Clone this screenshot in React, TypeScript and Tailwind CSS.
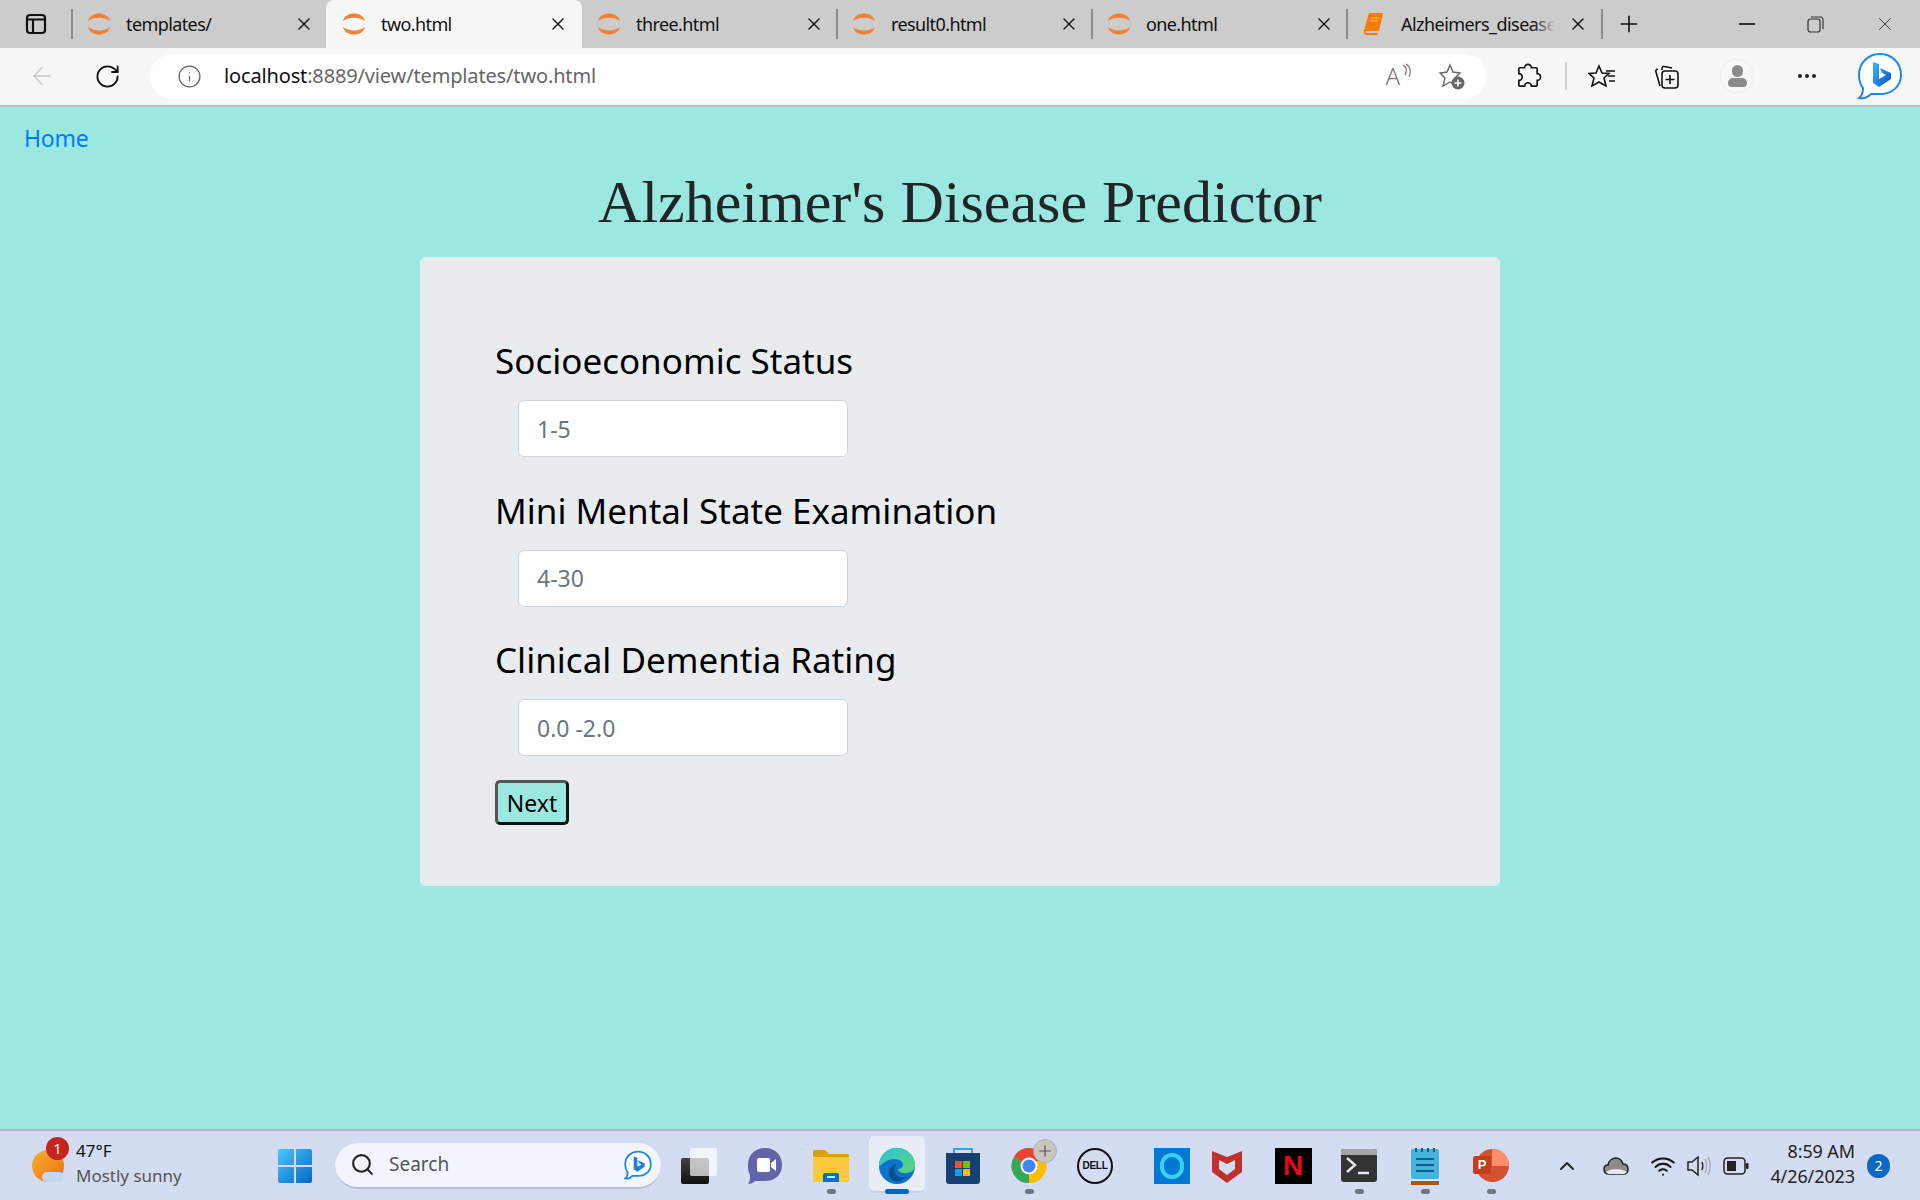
import { ArrowLeft, ChevronUp, Info, MoreHorizontal, Plus, RotateCw, Search, Wifi, X } from 'lucide-react';

function Spinner() {
  return (
    <svg width="24" height="24" viewBox="0 0 24 24" className="shrink-0">
      <path d="M1 9C3 -1 21 -1 23 9C18 4.5 6 4.5 1 9Z" fill="#f58233" />
      <path d="M1 15C3 25 21 25 23 15C18 19.5 6 19.5 1 15Z" fill="#f58233" />
    </svg>
  );
}

function Sep({ hidden }: { hidden?: boolean }) {
  return <div className={hidden ? 'w-[2px] h-[30px] shrink-0' : 'w-[2px] h-[30px] shrink-0 bg-[#8c8c8c]'} />;
}

function Tab({ title, className }: { title: string; className: string }) {
  return (
    <div className={`flex items-center h-[48px] shrink-0 ${className}`}>
      <Spinner />
      <span className="ml-[15px] text-[18px] text-[#111] tracking-[-0.6px] flex-1">{title}</span>
      <X size={20} strokeWidth={1.6} color="#111" />
    </div>
  );
}

function TabBar() {
  return (
    <div className="flex items-center h-[48px] bg-[#cccccc] shrink-0">
      <div className="w-[71px] flex justify-center shrink-0">
        <svg width="22" height="22" viewBox="0 0 22 22" fill="none" stroke="#111" strokeWidth="2.2">
          <rect x="2" y="2" width="18" height="18" rx="3" />
          <path d="M2 6.5H20M8 6.5V20" />
        </svg>
      </div>
      <Sep />
      <Tab title="templates/" className="w-[253px] pl-[14px] pr-[12px]" />
      <Tab title="two.html" className="w-[256px] pl-[16px] pr-[14px] bg-[#f7f7f7] rounded-t-lg" />
      <Tab title="three.html" className="w-[254px] pl-[15px] pr-[12px]" />
      <Sep />
      <Tab title="result0.html" className="w-[253px] pl-[14px] pr-[12px]" />
      <Sep />
      <Tab title="one.html" className="w-[253px] pl-[14px] pr-[12px]" />
      <Sep />
      <div className="flex items-center h-[48px] w-[253px] shrink-0 pl-[16px] pr-[12px]">
        <svg width="20" height="24" viewBox="0 0 20 24" className="shrink-0">
          <path d="M5 1H19L15 19H3C1 19 1 21 3 21H14L13.5 23H3C-1 23 0 19 0.5 17Z" fill="#f57c00" />
          <path d="M7 6H15M6.5 9H14" stroke="#ffc27a" strokeWidth="1" />
        </svg>
        <div className="relative ml-[17px] w-[154px] overflow-hidden shrink-0">
          <span className="block whitespace-nowrap text-[18px] text-[#111] tracking-[-0.55px]">Alzheimers_disease</span>
          <div className="absolute right-0 top-0 bottom-0 w-[22px] bg-gradient-to-r from-transparent to-[#cccccc]" />
        </div>
        <X size={20} strokeWidth={1.6} color="#111" className="ml-[13px] shrink-0" />
      </div>
      <Sep />
      <Plus size={26} strokeWidth={1.5} color="#111" className="ml-[13px] shrink-0" />
      <div className="flex-1 flex justify-end items-center pr-[24px]">
        <div className="w-[16px] h-[1.5px] bg-[#333]" />
        <svg width="17" height="17" viewBox="0 0 17 17" fill="none" stroke="#333" strokeWidth="1.2" className="ml-[52px]">
          <rect x="1" y="3" width="12" height="13" rx="2.5" />
          <path d="M4 1H13C15 1 16 2 16 4V13" />
        </svg>
        <X size={22} strokeWidth={1} color="#333" className="ml-[50px]" />
      </div>
    </div>
  );
}

function ToolBar() {
  return (
    <div className="flex items-center h-[59px] bg-[#f7f7f7] border-b-2 border-[#bbbbbb] shrink-0 pb-[1px]">
      <ArrowLeft size={28} strokeWidth={1.2} color="#c9c9c9" className="ml-[28px] shrink-0" />
      <RotateCw size={27} strokeWidth={1.6} color="#111" className="ml-[38px] shrink-0" />
      <div className="ml-[29px] w-[1336px] h-[45px] bg-white rounded-full flex items-center shrink-0">
        <Info size={25} strokeWidth={1.2} color="#666" className="ml-[27px] shrink-0" />
        <span className="ml-[22px] text-[20px] tracking-[-0.15px] text-[#111]">localhost<span className="text-[#666]">:8889/view/templates/two.html</span></span>
        <div className="flex-1" />
        <span className="text-[24px] font-light text-[#777] mr-[2px]">A</span>
        <svg width="10" height="18" viewBox="0 0 10 18" fill="none" stroke="#777" strokeWidth="1.2" className="mb-[8px]">
          <path d="M1 2C5 4 5 9 3 12M4 1C9 4 9 10 7 14" />
        </svg>
        <svg width="28" height="28" viewBox="0 0 28 28" className="ml-[26px] mr-[20px]">
          <path d="M12 3L15 10L22 11L17 16L18 24L12 20L5 24L7 16L2 11L9 10Z" fill="none" stroke="#666" strokeWidth="1.4" />
          <circle cx="20" cy="21" r="6.5" fill="#666" />
          <path d="M20 17.5V24.5M16.5 21H23.5" stroke="#fff" strokeWidth="1.5" />
        </svg>
      </div>
      <svg width="28" height="28" viewBox="0 0 29 29" fill="none" stroke="#111" strokeWidth="1.7" className="ml-[28px] shrink-0">
        <path d="M11 6a3.5 3.5 0 0 1 7 0h5a1 1 0 0 1 1 1v5a3.5 3.5 0 0 1 0 7v5a1 1 0 0 1-1 1h-5a3.5 3.5 0 0 0-7 0H6a1 1 0 0 1-1-1v-5a3.5 3.5 0 0 0 0-7V7a1 1 0 0 1 1-1Z" />
      </svg>
      <div className="ml-[23px] w-[2px] h-[28px] bg-[#cfcfcf] shrink-0" />
      <svg width="28" height="26" viewBox="0 0 28 26" fill="none" stroke="#111" strokeWidth="1.6" className="ml-[21px] shrink-0">
        <path d="M11 3L14 10L21 10.5L16 15L18 23L11 19L4 23L6 15L1 10.5L8 10Z" />
        <path d="M18 8H27M20 13H27M21 18H27" />
      </svg>
      <svg width="26" height="28" viewBox="0 0 26 28" fill="none" stroke="#111" strokeWidth="1.6" className="ml-[38px] shrink-0">
        <path d="M8 8V6.5C8 5 9 4 10.5 4.5L18 6M6 24L2 10C1.5 8.5 2 7.5 4 7" />
        <rect x="8" y="9" width="16" height="17" rx="3" />
        <path d="M16 13V22M11.5 17.5H20.5" />
      </svg>
      <div className="ml-[40px] w-[34px] h-[34px] rounded-full border border-[#eeeeee] flex flex-col items-center justify-center shrink-0">
        <div className="w-[11px] h-[12px] rounded-full bg-[#8a8a8a]" />
        <div className="w-[19px] h-[9px] rounded-t-[6px] rounded-b-[5px] bg-[#8a8a8a] mt-[1px]" />
      </div>
      <MoreHorizontal size={24} strokeWidth={2} color="#222" className="ml-[41px] shrink-0" />
      <svg width="46" height="48" viewBox="0 0 46 48" className="ml-[38px] shrink-0">
        <defs>
          <linearGradient id="bingB" x1="0" y1="0" x2="1" y2="1">
            <stop offset="0" stopColor="#37bdf8" />
            <stop offset="1" stopColor="#0a4fd0" />
          </linearGradient>
        </defs>
        <path d="M23 2C35 2 44 11 44 23C44 34 35 42 24 42H14C10 46 6 47 2 46C5 44 6 41 6 36C3 32 2 28 2 23C2 11 11 2 23 2Z" fill="#fff" stroke="#1e88e5" strokeWidth="2" />
        <path d="M16 10L22 12V27L29 23L25 21L23 16L34 21V27L22 35L16 31Z" fill="url(#bingB)" />
      </svg>
    </div>
  );
}

function Field({ label, hint }: { label: string; hint: string }) {
  return (
    <div>
      <label className="block text-[35px] leading-[54px] text-black mb-[12px]">{label}</label>
      <input
        placeholder={hint}
        className="block ml-[23px] w-[330px] h-[57px] bg-white border border-[#ced4da] rounded-[6px] pl-[18px] text-[23px] placeholder:text-[#6c757d]"
      />
    </div>
  );
}

function Page() {
  return (
    <main className="flex-1 bg-[#9be8e1] min-h-0">
      <div className="px-[24px] pt-[13px] h-[50px]">
        <a className="text-[#007bff] text-[23px] leading-[36px] tracking-[-0.2px]">Home</a>
      </div>
      <h1 className="font-['Liberation_Serif',serif] text-center text-[60px] leading-[72px] text-[#212529] h-[100px] pt-[9px]">
        Alzheimer's Disease Predictor
      </h1>
      <div className="w-[1080px] h-[629px] mx-auto bg-[#e9ecef] rounded-[6px] pl-[75px] pt-[77px]">
        <div className="flex flex-col gap-[26.5px]">
          <Field label="Socioeconomic Status" hint="1-5" />
          <Field label="Mini Mental State Examination" hint="4-30" />
          <Field label="Clinical Dementia Rating" hint="0.0 -2.0" />
        </div>
        <button className="mt-[24px] w-[74px] h-[45px] bg-[#9be8e1] border-[3px] border-t-[#555] border-l-[#555] border-r-[#111] border-b-[#111] rounded-[5px] text-[23px] leading-[30px] text-black">
          Next
        </button>
      </div>
    </main>
  );
}

function Cell({ dot, active, children, className }: { dot?: boolean; active?: boolean; children: React.ReactNode; className?: string }) {
  return (
    <div className={`relative h-[71px] flex items-center justify-center shrink-0 ${className ?? 'w-[66px]'}`}>
      {active && <div className="absolute left-[5px] right-[5px] top-[6px] h-[57px] rounded-md bg-[#e8edf8] border-b-2 border-[#c8cfe4]" />}
      <div className="relative">{children}</div>
      {dot && <div className="absolute bottom-[7px] w-[9px] h-[5px] rounded-full bg-[#70757f]" />}
      {active && <div className="absolute bottom-[7px] w-[24px] h-[5px] rounded-full bg-[#0067c0]" />}
    </div>
  );
}

function TaskBar() {
  return (
    <div className="h-[71px] shrink-0 bg-[#d4dcf2] border-t-2 border-[#b4b6cb] flex items-center relative">
      {/* weather */}
      <div className="w-[258px] flex items-center pl-[30px] shrink-0">
        <div className="relative w-[36px] h-[40px] shrink-0 mt-[4px]">
          <div className="absolute left-[2px] top-[2px] w-[32px] h-[32px] rounded-full bg-gradient-to-br from-[#f5b32c] to-[#ee6a12]" />
          <div className="absolute left-[12px] top-[24px] w-[22px] h-[10px] rounded-full bg-[#c6d6ee]" />
          <div className="absolute left-[16px] top-[-11px] w-[23px] h-[23px] rounded-full bg-[#c4261d] text-white text-[14px] leading-[23px] text-center">1</div>
        </div>
        <div className="ml-[10px] flex flex-col mb-[4px]">
          <span className="text-[17px] leading-[24px] text-[#111]">47°F</span>
          <span className="text-[17px] leading-[25px] text-[#555] whitespace-nowrap">Mostly sunny</span>
        </div>
      </div>
      {/* start */}
      <svg width="36" height="36" viewBox="0 0 36 36" className="shrink-0 ml-[19px]">
        <defs>
          <linearGradient id="winG" x1="0" y1="0" x2="1" y2="1">
            <stop offset="0" stopColor="#4fc6fa" />
            <stop offset="1" stopColor="#0067c8" />
          </linearGradient>
        </defs>
        <path d="M1 3Q1 1 3 1H17V17H1ZM19 1H33Q35 1 35 3V17H19ZM1 19H17V35H3Q1 35 1 33ZM19 19H35V33Q35 35 33 35H19Z" fill="url(#winG)" />
      </svg>
      {/* search */}
      <div className="ml-[22px] w-[326px] h-[46px] rounded-full bg-[#f2f5fd] border-b-2 border-[#babed2] flex items-center shrink-0">
        <Search size={25} strokeWidth={2} color="#222" className="ml-[15px] shrink-0" />
        <span className="ml-[14px] text-[19px] text-[#555] flex-1">Search</span>
        <svg width="28" height="32" viewBox="0 0 46 48" className="mr-[9px]">
          <path d="M23 2C35 2 44 11 44 23C44 34 35 42 24 42H14C10 46 6 47 2 46C5 44 6 41 6 36C3 32 2 28 2 23C2 11 11 2 23 2Z" fill="#fff" stroke="#1e88e5" strokeWidth="3" />
          <path d="M16 10L22 12V27L29 23L25 21L23 16L34 21V27L22 35L16 31Z" fill="#1f7fe0" />
        </svg>
      </div>
      <div className="w-[5px] shrink-0" />
      {/* pinned apps */}
      <Cell>
        <div className="relative w-[36px] h-[36px]">
          <div className="absolute left-0 bottom-0 w-[28px] h-[26px] rounded-[2px] bg-gradient-to-b from-[#444] to-[#111]" />
          <div className="absolute right-0 top-0 w-[27px] h-[28px] rounded-[2px] bg-white/70" />
        </div>
      </Cell>
      <Cell>
        <svg width="36" height="38" viewBox="0 0 36 38">
          <path d="M18 1C28 1 35 8 35 18C35 28 28 34 18 34H8C6 36 4 37 1 37C3 35 3 32 3 28C1 25 1 22 1 18C1 8 8 1 18 1Z" fill="#6264a7" />
          <rect x="10" y="11" width="13" height="14" rx="2" fill="#fff" />
          <path d="M24 16L29 12V24L24 20Z" fill="#fff" />
        </svg>
      </Cell>
      <Cell dot>
        <svg width="38" height="34" viewBox="0 0 38 34">
          <path d="M1 3Q1 1 3 1H13L17 5H36Q37 5 37 7V12H1Z" fill="#d99f0f" />
          <path d="M1 8H37V33H1Z" fill="#fdc93f" />
          <path d="M11 33V26Q11 24 13 24H25Q27 24 27 26V33Z" fill="#0a6fc2" />
          <rect x="15" y="27" width="8" height="2" fill="#cfe6f8" />
        </svg>
      </Cell>
      <Cell active>
        <svg width="38" height="38" viewBox="0 0 38 38">
          <defs>
            <linearGradient id="edgeA" x1="0" y1="0" x2="1" y2="1">
              <stop offset="0" stopColor="#2bc4d8" />
              <stop offset="1" stopColor="#5fd47a" />
            </linearGradient>
          </defs>
          <circle cx="19" cy="19" r="18" fill="#0c74c9" />
          <path d="M1 19C1 8 9 1 19 1C30 1 37 9 37 18C37 24 32 26 27 26C22 26 20 24 20 22C25 22 26 18 24 15C21 11 12 11 7 15C4 17 2 19 1 19Z" fill="url(#edgeA)" />
          <path d="M24 33C18 37 10 33 11 24C12 20 16 17 19 17C15 20 16 27 21 30C23 31 27 31 31 29C29 31 27 32 24 33Z" fill="#0b4f8f" />
        </svg>
      </Cell>
      <Cell>
        <svg width="36" height="38" viewBox="0 0 36 38">
          <path d="M9 6V2H27V6" fill="none" stroke="#26a9e0" strokeWidth="2" />
          <path d="M1 6H35V34Q35 37 32 37H4Q1 37 1 34Z" fill="#173f72" />
          <rect x="10" y="14" width="7" height="7" fill="#f25022" />
          <rect x="18" y="14" width="7" height="7" fill="#7fba00" />
          <rect x="10" y="22" width="7" height="7" fill="#00a4ef" />
          <rect x="18" y="22" width="7" height="7" fill="#ffb900" />
        </svg>
      </Cell>
      <Cell dot>
        <div className="relative">
          <svg width="38" height="38" viewBox="0 0 38 38">
            <path d="M19 19L4 10A17 17 0 0 1 34 10Z" fill="#ea4335" />
            <path d="M19 19L34 10A17 17 0 0 1 19 36Z" fill="#fbbc05" />
            <path d="M19 19L19 36A17 17 0 0 1 4 10Z" fill="#34a853" />
            <circle cx="19" cy="19" r="8.5" fill="#fff" />
            <circle cx="19" cy="19" r="6.5" fill="#4285f4" />
          </svg>
          <div className="absolute right-[-9px] top-[-8px] w-[24px] h-[24px] rounded-full bg-[#c9c7c0] border border-[#a8adb8] flex items-center justify-center">
            <Plus size={18} strokeWidth={1.6} color="#555" />
          </div>
        </div>
      </Cell>
      <Cell>
        <div className="w-[36px] h-[36px] rounded-full border-2 border-[#111] flex items-center justify-center font-['Liberation_Sans',sans-serif] text-[10px] font-bold text-[#111] tracking-[-0.3px]">
          DELL
        </div>
      </Cell>
      <Cell className="w-[44px] ml-[22px]">
        <div className="w-[36px] h-[36px] bg-[#0078d4] flex items-center justify-center">
          <div className="w-[24px] h-[26px] rounded-full border-[4px] border-[#36d2f5]" />
        </div>
      </Cell>
      <Cell>
        <svg width="32" height="36" viewBox="0 0 32 36">
          <path d="M1 3L16 9L31 3V24L16 35L1 24Z" fill="#c0302d" />
          <path d="M8 12L16 16L24 12V21L16 27L8 21Z" fill="#d4dcf2" />
        </svg>
      </Cell>
      <Cell>
        <div className="w-[37px] h-[36px] bg-black flex items-center justify-center text-[#e50914] text-[28px] font-bold font-['Liberation_Sans',sans-serif]">N</div>
      </Cell>
      <Cell dot>
        <div className="w-[36px] h-[33px] rounded-[3px] bg-[#333] overflow-hidden">
          <div className="h-[6px] bg-[#a6a6a6]" />
          <svg width="36" height="27" viewBox="0 0 36 27" fill="none" stroke="#e8e8e8" strokeWidth="2.4">
            <path d="M6 3L14 10L6 17M17 18H28" />
          </svg>
        </div>
      </Cell>
      <Cell dot>
        <svg width="30" height="38" viewBox="0 0 30 38">
          <rect x="1" y="2" width="28" height="30" rx="2" fill="#47b3da" />
          <rect x="1" y="32" width="28" height="2" fill="#e8e2d8" />
          <rect x="1" y="34" width="28" height="4" fill="#a9570f" />
          <path d="M6 12H24M6 18H24M6 24H24" stroke="#0b5f88" strokeWidth="2" />
          <path d="M6 1V5M12 1V5M18 1V5M24 1V5" stroke="#0b5f88" strokeWidth="2" />
        </svg>
      </Cell>
      <Cell dot>
        <div className="relative w-[36px] h-[33px]">
          <div className="absolute right-0 top-0 w-[33px] h-[33px] rounded-full overflow-hidden bg-[#d35230]">
            <div className="absolute right-0 top-0 w-[17px] h-[17px] bg-[#ff8f6b]" />
          </div>
          <div className="absolute left-0 top-[7px] w-[18px] h-[18px] rounded-[2px] bg-[#c43e1c] text-white text-[13px] font-bold leading-[18px] text-center font-['Liberation_Sans',sans-serif]">P</div>
        </div>
      </Cell>
      {/* tray */}
      <ChevronUp size={24} strokeWidth={2} color="#222" className="ml-[31px] shrink-0" />
      <svg width="26" height="20" viewBox="0 0 26 20" className="ml-[24px] shrink-0">
        <path d="M6 18C2 18 1 15 1 13C1 10 3 9 5 9C6 4 10 2 13 2C17 2 19 5 20 8C23 8 25 10 25 13C25 16 23 18 20 18Z" fill="#8b8b8b" stroke="#222" strokeWidth="1.5" />
        <path d="M3 16C8 12 18 12 24 16C22 18 20 18 20 18H6C5 18 4 17 3 16Z" fill="#e6e8ee" />
      </svg>
      <Wifi size={26} strokeWidth={1.8} color="#111" className="ml-[21px] shrink-0" />
      <svg width="26" height="24" viewBox="0 0 26 24" fill="none" stroke="#222" strokeWidth="1.5" className="ml-[10px] shrink-0">
        <path d="M2 8H6L12 3V21L6 16H2Z" />
        <path d="M16 8C17 10 17 14 16 16" />
        <path d="M19 5C21 9 21 15 19 19M22 3C25 8 25 16 22 21" stroke="#a8adb8" />
      </svg>
      <svg width="26" height="18" viewBox="0 0 26 18" className="ml-[11px] shrink-0">
        <rect x="1" y="1" width="21" height="16" rx="3.5" fill="none" stroke="#222" strokeWidth="1.5" />
        <rect x="4" y="4" width="9" height="10" fill="#222" />
        <rect x="23" y="6" width="2.5" height="6" rx="1" fill="#222" />
      </svg>
      <div className="flex-1 flex flex-col items-end text-[18px] leading-[25px] text-[#222] mb-[4px] tracking-[-0.1px]">
        <span>8:59 AM</span>
        <span>4/26/2023</span>
      </div>
      <div className="ml-[12px] mr-[30px] w-[23px] h-[24px] rounded-full bg-[#0f67c2] text-white text-[14px] leading-[24px] text-center shrink-0">2</div>
    </div>
  );
}

export default function App() {
  return (
    <div className="h-screen flex flex-col overflow-hidden font-['Noto_Sans',sans-serif]">
      <TabBar />
      <ToolBar />
      <Page />
      <TaskBar />
    </div>
  );
}
